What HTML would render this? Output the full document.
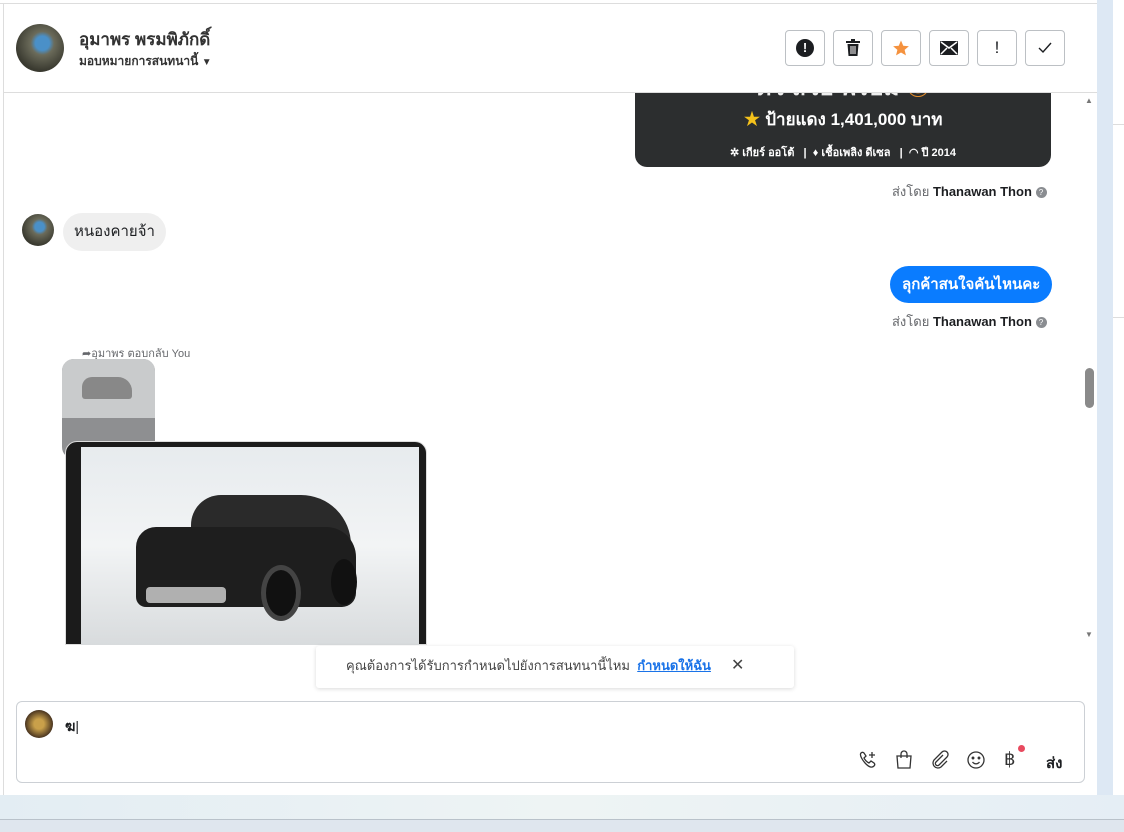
<!DOCTYPE html>
<html><head><meta charset="utf-8"><style>
*{box-sizing:border-box;margin:0;padding:0}
body{width:1124px;height:832px;overflow:hidden;background:#fff;font-family:"Liberation Sans","Noto Sans CJK SC",sans-serif;position:relative;color:#1c1e21}
.a{position:absolute}
.btn{position:absolute;top:30px;width:40px;height:36px;border:1px solid #bcc0c4;border-radius:4px;background:#fff;display:flex;align-items:center;justify-content:center}
.av{border-radius:50%;background:radial-gradient(circle at 55% 40%,#4a90c8 0 18%,#6b6b5a 30%,#3a3a30 70%)}
.sent{font-size:13px;color:#65676b}
.sent b{color:#1c1e21;font-weight:bold}
.q{display:inline-block;width:11px;height:11px;border-radius:50%;background:#8a8d91;color:#fff;font-size:8px;text-align:center;line-height:11px;vertical-align:1px}
.ic{position:absolute;top:750px}
</style></head><body>
<div class="a" style="left:1097px;top:0;width:16px;height:832px;background:#dde8f4"></div>
<div class="a" style="left:1113px;top:0;width:11px;height:832px;background:#fff"></div>
<div class="a" style="left:1113px;top:124px;width:11px;height:1px;background:#ddd"></div>
<div class="a" style="left:1113px;top:317px;width:11px;height:1px;background:#ddd"></div>
<div class="a" style="left:0;top:795px;width:1124px;height:37px;background:linear-gradient(90deg,#e3edf3,#eef4f4,#e5eef5)"></div>
<div class="a" style="left:0;top:819px;width:1124px;height:1px;background:#b9c2ca"></div>
<div class="a" style="left:0;top:820px;width:1124px;height:12px;background:#dfe6ee"></div>
<div class="a" style="left:0;top:3px;width:1097px;height:1px;background:#ddd"></div>
<div class="a" style="left:3px;top:3px;width:1px;height:792px;background:#ddd"></div>

<div class="a av" style="left:16px;top:24px;width:48px;height:48px"></div>
<div class="a" style="left:79px;top:26px;font-size:17px;font-weight:bold;color:#333">อุมาพร พรมพิภักดิ์</div>
<div class="a" style="left:79px;top:52px;font-size:12px;font-weight:bold;color:#333">มอบหมายการสนทนานี้ <span style="font-size:10px">▼</span></div>
<div class="a" style="left:4px;top:92px;width:1093px;height:1px;background:#ddd"></div>

<div class="btn" style="left:785px"><div style="width:18px;height:18px;border-radius:50%;background:#1c1e21;color:#fff;font-size:13px;font-weight:bold;text-align:center;line-height:18px">!</div></div>
<div class="btn" style="left:833px"><svg width="16" height="18" viewBox="0 0 16 18"><rect x="1" y="2" width="14" height="2" fill="#1c1e21"/><rect x="6" y="0" width="4" height="2" fill="#1c1e21"/><path d="M2.5 5h11l-1 12h-9z" fill="#1c1e21"/><path d="M6 7v8M8 7v8M10 7v8" stroke="#fff" stroke-width="1"/></svg></div>
<div class="btn" style="left:881px"><svg width="18" height="18" viewBox="0 0 24 24"><path d="M12 2l3 7 7.5.6-5.7 4.9 1.8 7.4L12 18l-6.6 3.9 1.8-7.4L1.5 9.6 9 9z" fill="#f5923e"/></svg></div>
<div class="btn" style="left:929px"><svg width="18" height="14" viewBox="0 0 18 14"><rect x="0" y="0" width="18" height="14" rx="1" fill="#1c1e21"/><path d="M1 1l8 6 8-6M1 13l6-6M17 13l-6-6" stroke="#fff" stroke-width="1.5" fill="none"/></svg></div>
<div class="btn" style="left:977px;font-size:17px">!</div>
<div class="btn" style="left:1025px"><svg width="14" height="12"><path d="M1 6l4 4 8-9" stroke="#1c1e21" stroke-width="1.4" fill="none"/></svg></div>

<div class="a" style="left:1085px;top:96px;font-size:8px;color:#777">▲</div>
<div class="a" style="left:1085px;top:630px;font-size:8px;color:#777">▼</div>
<div class="a" style="left:1085px;top:368px;width:9px;height:40px;border-radius:5px;background:#8a8a8a"></div>

<div class="a" style="left:635px;top:93px;width:416px;height:74px;background:#2c2e2f;border-radius:0 0 12px 12px;color:#fff;text-align:center;overflow:hidden">
 <div class="a" style="left:0;right:0;top:-26px;font-size:24px;font-weight:bold;color:#eee">ตัว สวย พร้อม <span style="color:#e08a2a">◎</span></div>
 <div style="font-size:17px;margin-top:12px;font-weight:bold"><span style="color:#f5c21b">★</span> ป้ายแดง 1,401,000 บาท</div>
 <div style="font-size:11px;margin-top:10px;font-weight:bold">✲ เกียร์ ออโต้ &nbsp; | &nbsp;♦ เชื้อเพลิง ดีเซล &nbsp; | &nbsp;◠ ปี 2014</div>
</div>
<div class="a sent" style="left:892px;top:181px">ส่งโดย <b>Thanawan Thon</b> <span class="q">?</span></div>

<div class="a av" style="left:22px;top:214px;width:32px;height:32px"></div>
<div class="a" style="left:63px;top:213px;height:38px;padding:0 11px;background:#efefef;border-radius:19px;font-size:15px;line-height:38px">หนองคายจ้า</div>

<div class="a" style="left:890px;top:266px;height:37px;padding:0 12px;background:#0a7cff;border-radius:19px;color:#fff;font-size:15px;font-weight:bold;line-height:37px">ลุกค้าสนใจคันไหนคะ</div>
<div class="a sent" style="left:892px;top:311px">ส่งโดย <b>Thanawan Thon</b> <span class="q">?</span></div>

<div class="a" style="left:82px;top:344px;font-size:11px;color:#65676b">➦อุมาพร ตอบกลับ You</div>
<div class="a" style="left:62px;top:359px;width:93px;height:100px;border-radius:12px;background:#8e8f91;overflow:hidden">
 <div style="height:59px;background:#c9cbcc;position:relative"><div class="a" style="left:20px;top:18px;width:50px;height:22px;background:#888;border-radius:10px 14px 3px 3px"></div></div>
</div>
<div class="a" style="left:65px;top:441px;width:362px;height:204px;background:#1b1b1b;border-radius:12px 12px 0 0;border:1px solid #ddd"></div>
<div class="a" style="left:81px;top:447px;width:338px;height:198px;background:linear-gradient(180deg,#e7ebee 0%,#f2f4f5 50%,#d8dbdd 100%);overflow:hidden">
 <div class="a" style="left:110px;top:48px;width:160px;height:60px;background:#2a2a2a;border-radius:30px 50px 6px 6px"></div>
 <div class="a" style="left:55px;top:80px;width:220px;height:80px;background:#1e1e1e;border-radius:20px 30px 14px 10px"></div>
 <div class="a" style="left:65px;top:140px;width:80px;height:16px;background:#b0b0b0;border-radius:4px"></div>
 <div class="a" style="left:180px;top:118px;width:40px;height:56px;background:#111;border-radius:50%;border:5px solid #444"></div>
 <div class="a" style="left:250px;top:112px;width:26px;height:46px;background:#111;border-radius:50%"></div>
</div>

<div class="a" style="left:316px;top:646px;width:478px;height:42px;background:#fff;box-shadow:0 1px 4px rgba(0,0,0,.15);border-radius:3px;font-size:13px;color:#444;line-height:40px;padding-left:30px">คุณต้องการได้รับการกำหนดไปยังการสนทนานี้ไหม &nbsp;<span style="color:#1a73e8;text-decoration:underline;font-weight:bold">กำหนดให้ฉัน</span><span style="margin-left:20px;font-size:16px">✕</span></div>

<div class="a" style="left:16px;top:701px;width:1069px;height:82px;border:1px solid #ccd0d5;border-radius:6px;background:#fff"></div>
<div class="a av" style="left:25px;top:710px;width:28px;height:28px;background:radial-gradient(circle,#c9a04a 0 25%,#4a3520 70%)"></div>
<div class="a" style="left:65px;top:716px;font-size:14px;font-weight:bold">ฆ<span style="font-weight:normal">|</span></div>
<svg class="ic" style="left:858px" width="20" height="20" viewBox="0 0 20 20" fill="none" stroke="#333" stroke-width="1.3"><path d="M3 3c1-1 2-1 3 0l2 3-2 2c1 2 3 4 5 5l2-2 3 2c1 1 1 2 0 3-2 2-5 1-8-2S1 5 3 3z"/><path d="M14 2v6M11 5h6"/></svg>
<svg class="ic" style="left:894px" width="20" height="20" viewBox="0 0 20 20" fill="none" stroke="#333" stroke-width="1.3"><path d="M3 6h14l-1 12H4z"/><path d="M7 8V4a3 3 0 016 0v4"/></svg>
<svg class="ic" style="left:930px" width="20" height="20" viewBox="0 0 20 20" fill="none" stroke="#333" stroke-width="1.3"><path d="M13 5l-7 7a2 2 0 003 3l8-8a3.5 3.5 0 00-5-5L4 10a5 5 0 007 7l6-6"/></svg>
<svg class="ic" style="left:966px" width="20" height="20" viewBox="0 0 20 20" fill="none" stroke="#333" stroke-width="1.3"><circle cx="10" cy="10" r="8"/><circle cx="7" cy="8" r=".8" fill="#333"/><circle cx="13" cy="8" r=".8" fill="#333"/><path d="M6.5 12c2 2.5 5 2.5 7 0"/></svg>
<div class="a" style="left:1004px;top:749px;font-size:18px;color:#333">฿</div>
<div class="a" style="left:1018px;top:745px;width:7px;height:7px;border-radius:50%;background:#e84a5f"></div>
<div class="a" style="left:1046px;top:751px;font-size:15px;font-weight:bold">ส่ง</div>
</body></html>
